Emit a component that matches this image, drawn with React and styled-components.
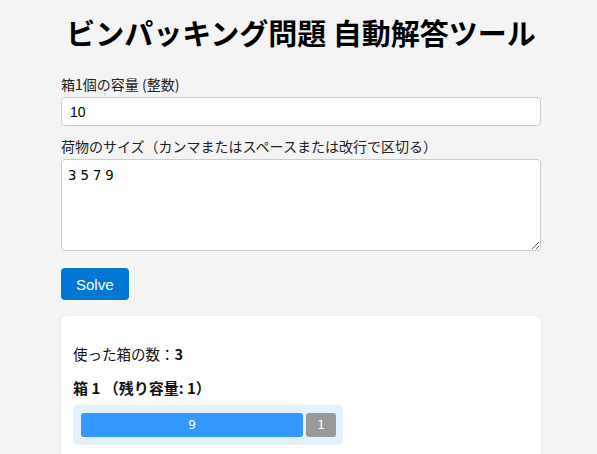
import React, { useState } from "react";
import styled, { createGlobalStyle } from "styled-components";

const GlobalStyle = createGlobalStyle`
  body {
    margin: 0;
    background: #f4f4f4;
    font-family: "Noto Sans CJK JP", "Noto Sans", sans-serif;
    color: #111;
  }
`;

const Page = styled.div`
  width: 480px;
  margin: 0 auto;
  padding: 16px 0 40px 5px;
`;

const Title = styled.h1`
  margin: 0 0 26px;
  font-size: 29px;
  line-height: 32px;
  font-weight: 700;
  text-align: center;
  color: #000;
`;

const Label = styled.label`
  display: block;
  font-size: 14px;
  line-height: 20px;
  margin-bottom: 3px;
  color: #222;
`;

const Field = styled.div`
  margin-bottom: ${(p) => p.$gap || 10}px;
`;

const TextInput = styled.input`
  display: block;
  box-sizing: border-box;
  width: 100%;
  height: 29px;
  padding: 0 8px;
  border: 1px solid #ccc;
  border-radius: 4px;
  background: #fff;
  font-family: "Liberation Sans", Arial, sans-serif;
  font-size: 14px;
  color: #000;
`;

const TextArea = styled.textarea`
  display: block;
  box-sizing: border-box;
  width: 100%;
  height: 92px;
  padding: 6px 6px;
  border: 1px solid #ccc;
  border-radius: 4px;
  background: #fff;
  font-family: "DejaVu Sans Mono", monospace;
  font-size: 14px;
  letter-spacing: -2.2px;
  line-height: 18px;
  color: #000;
  resize: vertical;
`;

const SolveButton = styled.button`
  display: block;
  height: 32px;
  padding: 0 15px;
  border: none;
  border-radius: 4px;
  background: #0078d4;
  color: #fff;
  font-family: "Liberation Sans", Arial, sans-serif;
  font-size: 15px;
  cursor: pointer;
  margin-bottom: 16px;
`;

const Card = styled.div`
  background: #fff;
  border-radius: 6px;
  box-shadow: 0 1px 4px rgba(0, 0, 0, 0.08);
  padding: 12px 12px 20px;
`;

const Summary = styled.p`
  margin: 15px 0 12px;
  font-size: 14.5px;
  line-height: 22px;
`;

const BinTitle = styled.div`
  font-size: 15px;
  font-weight: 700;
  line-height: 22px;
  margin-bottom: 6px;
`;

const BinBar = styled.div`
  display: inline-flex;
  gap: 3px;
  padding: 8px 7px 8px 8px;
  background: #e3f0fd;
  border-radius: 5px;
`;

const Item = styled.div`
  height: 24px;
  border-radius: 3px;
  background: ${(p) => (p.$empty ? "#999" : "#3399ff")};
  color: #fff;
  font-family: "DejaVu Sans", sans-serif;
  font-size: 12px;
  display: flex;
  align-items: center;
  justify-content: center;
`;

const itemWidth = (size) => Math.max(30, size * 25 - 3);

export default function App() {
  const [capacity, setCapacity] = useState("10");
  const [sizes, setSizes] = useState("3 5 7 9");
  const bins = [{ items: [9], remaining: 1 }];

  return (
    <Page>
      <GlobalStyle />
      <Title>ビンパッキング問題 自動解答ツール</Title>
      <Field $gap={10}>
        <Label>箱1個の容量 (整数)</Label>
        <TextInput value={capacity} onChange={(e) => setCapacity(e.target.value)} />
      </Field>
      <Field $gap={17}>
        <Label>荷物のサイズ（カンマまたはスペースまたは改行で区切る）</Label>
        <TextArea value={sizes} onChange={(e) => setSizes(e.target.value)} />
      </Field>
      <SolveButton>Solve</SolveButton>
      <Card>
        <Summary>
          使った箱の数：<b>3</b>
        </Summary>
        {bins.map((bin, i) => (
          <div key={i}>
            <BinTitle>
              箱 {i + 1} （残り容量: {bin.remaining}）
            </BinTitle>
            <BinBar>
              {bin.items.map((s, j) => (
                <Item key={j} style={{ width: itemWidth(s) }}>
                  {s}
                </Item>
              ))}
              <Item $empty style={{ width: itemWidth(bin.remaining) }}>
                {bin.remaining}
              </Item>
            </BinBar>
          </div>
        ))}
      </Card>
    </Page>
  );
}
